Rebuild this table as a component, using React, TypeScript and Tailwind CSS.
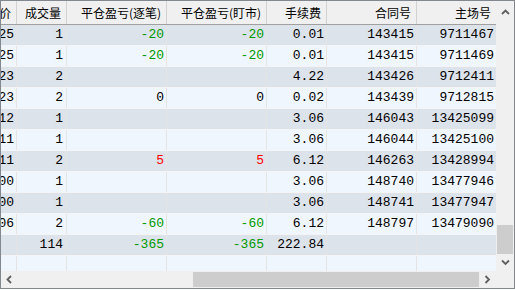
import React from "react";

type Row = {
    p: string;
    q: string;
    a: string;
    b: string;
    fee: string;
    c: string;
    m: string;
};

const rows: Row[] = [
    { p: "3425", q: "1", a: "-20", b: "-20", fee: "0.01", c: "143415", m: "9711467" },
    { p: "3425", q: "1", a: "-20", b: "-20", fee: "0.01", c: "143415", m: "9711469" },
    { p: "3423", q: "2", a: "", b: "", fee: "4.22", c: "143426", m: "9712411" },
    { p: "3423", q: "2", a: "0", b: "0", fee: "0.02", c: "143439", m: "9712815" },
    { p: "3412", q: "1", a: "", b: "", fee: "3.06", c: "146043", m: "13425099" },
    { p: "3411", q: "1", a: "", b: "", fee: "3.06", c: "146044", m: "13425100" },
    { p: "3411", q: "2", a: "5", b: "5", fee: "6.12", c: "146263", m: "13428994" },
    { p: "3400", q: "1", a: "", b: "", fee: "3.06", c: "148740", m: "13477946" },
    { p: "3400", q: "1", a: "", b: "", fee: "3.06", c: "148741", m: "13477947" },
    { p: "3406", q: "2", a: "-60", b: "-60", fee: "6.12", c: "148797", m: "13479090" },
    { p: "", q: "114", a: "-365", b: "-365", fee: "222.84", c: "", m: "" },
];

const pnlColor = (v: string) => {
    const n = parseFloat(v);
    if (isNaN(n) || n === 0) return "text-black";
    return n < 0 ? "text-[#009900]" : "text-[#ff0000]";
};

const cols = [
    { title: "成交价", w: "w-[16px]" },
    { title: "成交量", w: "w-[50px]" },
    { title: "平仓盈亏(逐笔)", w: "w-[100px]" },
    { title: "平仓盈亏(盯市)", w: "w-[100px]" },
    { title: "手续费", w: "w-[60px]" },
    { title: "合同号", w: "w-[90px]" },
    { title: "主场号", w: "w-[79px]" },
];

const Chevron = ({ dir }: { dir: "up" | "down" | "left" | "right" }) => {
    const d = {
        up: "M1 5 L4.5 1.5 L8 5",
        down: "M1 1.5 L4.5 5 L8 1.5",
        left: "M5 1 L1.5 4.5 L5 8",
        right: "M1.5 1 L5 4.5 L1.5 8",
    }[dir];
    const size = dir === "up" || dir === "down" ? { w: 9, h: 7 } : { w: 7, h: 9 };
    return (
        <svg width={size.w} height={size.h} viewBox={`0 0 ${size.w} ${size.h}`}>
            <path d={d} fill="none" stroke="#606060" strokeWidth="1.8" />
        </svg>
    );
};

const Cell = ({ w, last, children, className }: { w: string; last?: boolean; children?: React.ReactNode; className?: string }) => (
    <div className={`${w} shrink-0 overflow-hidden whitespace-nowrap flex items-center justify-end pr-[2px] ${last ? "" : "border-r border-[#e4e4e4]"} ${className ?? ""}`}>
        {children}
    </div>
);

export default function App() {
    return (
        <div className="w-[515px] h-[290px] bg-white">
            <div className="w-[515px] h-[289px] border border-[#828790] flex flex-col bg-[#f0f6fe]">
                <div className="flex flex-1 min-h-0">
                    {/* table */}
                    <div className="w-[495px] flex flex-col overflow-hidden">
                        <div className="h-[24px] flex bg-[#f0f0f0] border-b border-[#a0a0a0] shrink-0" style={{ fontFamily: '"Noto Sans CJK SC", sans-serif' }}>
                            {cols.map((c, i) => (
                                <div
                                    key={c.title}
                                    className={`${c.w} shrink-0 overflow-hidden whitespace-nowrap flex items-center justify-end pr-[5px] text-[12px] text-black ${i < cols.length - 1 ? "border-r border-[#d2d2d2]" : ""}`}
                                >
                                    {c.title}
                                </div>
                            ))}
                        </div>
                        <div className="flex-1 flex flex-col text-[13px] text-black" style={{ fontFamily: '"Liberation Mono", monospace' }}>
                            {rows.map((r, i) => (
                                <div
                                    key={i}
                                    className={`h-[21px] flex shrink-0 border-b border-[#f4f4f4] ${i % 2 === 0 ? "bg-[#dde3eb]" : "bg-[#f0f6fe]"}`}
                                >
                                    <Cell w={cols[0].w} className="pr-[1px]">{r.p}</Cell>
                                    <Cell w={cols[1].w} className="pr-[3px]">{r.q}</Cell>
                                    <Cell w={cols[2].w} className={pnlColor(r.a)}>{r.a}</Cell>
                                    <Cell w={cols[3].w} className={pnlColor(r.b)}>{r.b}</Cell>
                                    <Cell w={cols[4].w}>{r.fee}</Cell>
                                    <Cell w={cols[5].w}>{r.c}</Cell>
                                    <Cell w={cols[6].w} last>{r.m}</Cell>
                                </div>
                            ))}
                            <div className="flex-1 flex bg-[#f0f6fe]">
                                <Cell w={cols[0].w} />
                                <Cell w={cols[1].w} />
                                <Cell w={cols[2].w} />
                                <Cell w={cols[3].w} />
                                <Cell w={cols[4].w} />
                                <Cell w={cols[5].w} />
                                <Cell w={cols[6].w} last />
                            </div>
                        </div>
                    </div>
                    {/* vertical scrollbar */}
                    <div className="w-[18px] bg-[#f0f0f0] flex flex-col items-center">
                        <div className="h-[17px] flex items-center justify-center pt-[6px]">
                            <Chevron dir="up" />
                        </div>
                        <div className="flex-1 flex flex-col justify-end w-full pb-[0px]">
                            <div className="h-[29px] mx-[1px] bg-[#cdcdcd]" />
                        </div>
                        <div className="h-[17px] flex items-center justify-center">
                            <Chevron dir="down" />
                        </div>
                    </div>
                </div>
                {/* horizontal scrollbar */}
                <div className="h-[17px] flex bg-[#f0f0f0] shrink-0">
                    <div className="w-[495px] flex items-center">
                        <div className="w-[17px] flex items-center justify-center">
                            <Chevron dir="left" />
                        </div>
                        <div className="flex-1 h-full flex items-center">
                            <div className="ml-[175px] w-[286px] h-[15px] bg-[#cdcdcd]" />
                        </div>
                        <div className="w-[17px] flex items-center justify-center">
                            <Chevron dir="right" />
                        </div>
                    </div>
                    <div className="w-[18px] bg-[#f0f0f0]" />
                </div>
            </div>
        </div>
    );
}
